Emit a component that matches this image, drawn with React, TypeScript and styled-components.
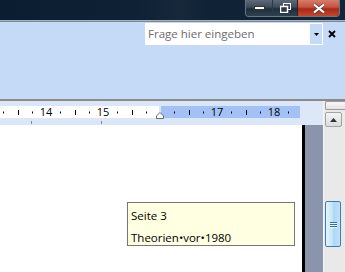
import React from "react";
import styled, { createGlobalStyle } from "styled-components";

const Global = createGlobalStyle`
  html, body { margin: 0; padding: 0; overflow: hidden; background: #fff; }
  * { box-sizing: border-box; }
`;

const Frame = styled.div`
  width: 345px;
  height: 272px;
  display: flex;
  flex-direction: column;
  font-family: "Open Sans", "Noto Sans", sans-serif;
  overflow: hidden;
`;

const TitleBar = styled.div`
  height: 20px;
  flex: none;
  background: linear-gradient(90deg, #0b1d31 0%, #0f2135 40%, #16283a 52%, #0f2236 62%, #11263a 100%);
  display: flex;
  justify-content: flex-end;
  padding-right: 5px;
`;

const Separator = styled.div`
  height: 2px;
  flex: none;
  background: #a7b0bb;
  border-bottom: 1px solid #7d8896;
`;

const WinButtons = styled.div`
  display: flex;
  height: 17px;
  border: 1px solid #6c7580;
  border-top: none;
  border-radius: 0 0 4px 4px;
  overflow: hidden;
`;

const WinBtn = styled.div<{ $w: number; $close?: boolean }>`
  width: ${(p) => p.$w}px;
  height: 100%;
  display: flex;
  align-items: center;
  justify-content: center;
  border-left: ${(p) => (p.$close ? "1px solid #3a1c1c" : "1px solid #2c3a48")};
  background: ${(p) =>
    p.$close
      ? "linear-gradient(180deg, #d77b6b 0%, #c5533f 45%, #a82a17 55%, #c4462c 100%)"
      : "linear-gradient(180deg, #5d6b79 0%, #3b4a59 45%, #1f2e3d 55%, #2f4050 100%)"};
  &:first-child { border-left: none; }
`;

const Ribbon = styled.div`
  height: 78px;
  flex: none;
  background: #c5daf7;
  display: flex;
  align-items: flex-start;
  padding: 1px 0 0 145px;
`;

const SearchBox = styled.div`
  width: 178px;
  height: 22px;
  background: #fff;
  display: flex;
  align-items: stretch;
`;

const SearchText = styled.div`
  flex: 1;
  font-size: 11.5px;
  color: #6d6d6d;
  padding: 3px 0 0 3px;
  line-height: 15px;
`;

const Drop = styled.div`
  width: 12px;
  background: #c5daf7;
  margin: 1px 1px 1px 0;
  display: flex;
  align-items: center;
  justify-content: center;
`;

const CloseX = styled.div`
  width: 18px;
  height: 22px;
  display: flex;
  align-items: center;
  justify-content: center;
`;

const Body = styled.div`
  flex: 1;
  display: flex;
  border-top: 2px solid #8b8b8b;
  margin-top: -1px;
`;

const LeftCol = styled.div`
  width: 323px;
  display: flex;
  flex-direction: column;
`;

const RulerRow = styled.div`
  height: 24px;
  flex: none;
  display: flex;
  background: #dbe7f9;
`;

const RulerRight = styled.div`
  flex: 1;
  background: #dce7f8;
`;

const ContentRow = styled.div`
  flex: 1;
  display: flex;
`;

const Page = styled.div`
  width: 302px;
  background: #fff;
  position: relative;
`;

const PageEdge = styled.div`
  width: 3px;
  background: #000;
`;

const Gutter = styled.div`
  flex: 1;
  background: #8a94aa;
`;

const ScrollCol = styled.div`
  flex: 1;
  background: #e9e9ea;
  border-left: 1px solid #f5f5f5;
  display: flex;
  flex-direction: column;
  align-items: flex-start;
  padding: 0 0 0 1px;
`;

const SplitBox = styled.div`
  width: 20px;
  height: 9px;
  border: 1px solid #9a9a9a;
  border-right: none;
  background: linear-gradient(180deg, #f7f7f7, #e4e4e4);
  border-radius: 2px 0 0 2px;
`;

const ArrowBtn = styled.div`
  width: 17px;
  height: 15px;
  margin-top: 2px;
  border: 1px solid #a3a3a3;
  border-radius: 2px;
  background: linear-gradient(180deg, #f4f4f4, #dcdcdc);
  display: flex;
  align-items: center;
  justify-content: center;
`;

const Thumb = styled.div`
  width: 16px;
  height: 46px;
  margin-top: 74px;
  border: 1px solid #3c7fb1;
  border-radius: 2px;
  background: linear-gradient(90deg, #e3f4fc 0%, #c4e5f8 45%, #a9d8f4 55%, #bfe2f7 100%);
  display: flex;
  flex-direction: column;
  align-items: center;
  justify-content: center;
  gap: 1px;
`;

const Grip = styled.div`
  width: 7px;
  height: 1px;
  background: #3c6d92;
  box-shadow: 0 1px 0 #e8f6fe;
`;

const Tooltip = styled.div`
  position: absolute;
  left: 127px;
  top: 77px;
  width: 168px;
  height: 44px;
  background: #ffffe1;
  border: 1px solid #767676;
  padding: 2px 0 0 3px;
  font-size: 11.5px;
  line-height: 22px;
  color: #000;
`;

const Ruler: React.FC = () => {
  const marks: React.ReactNode[] = [];
  for (let j = -3; j <= 18; j++) {
    const x = 46 + 14.25 * j;
    if (x < 0 || x > 300) continue;
    const m = ((j % 4) + 4) % 4;
    if (m === 0) {
      const n = 14 + j / 4;
      if (n === 16) continue;
      marks.push(
        <text key={j} x={x} y={15} fontSize={11} textAnchor="middle" fontFamily="'Open Sans', sans-serif" fill="#000">
          {n}
        </text>
      );
    } else if (m === 2) {
      marks.push(<rect key={j} x={Math.round(x)} y={9} width={1} height={5} fill="#000" />);
    } else {
      marks.push(<rect key={j} x={Math.round(x)} y={10.5} width={1} height={2} fill="#000" />);
    }
  }
  return (
    <svg width={300} height={24} style={{ display: "block", flex: "none" }}>
      <rect x={0} y={0} width={300} height={24} fill="#dbe7f9" />
      <rect x={0} y={5} width={159} height={12} fill="#fff" />
      <rect x={161} y={5} width={139} height={12} fill="#a3c1f4" />
      {marks}
      <rect x={31} y={20} width={1} height={3} fill="#8a8a8a" />
      <rect x={101} y={20} width={1} height={3} fill="#8a8a8a" />
      <polygon points="156.5,17.5 156.5,15 160,11.5 163.5,15 163.5,17.5" fill="#fff" stroke="#6a6a6a" strokeWidth={1} />
    </svg>
  );
};

export default function App() {
  return (
    <Frame>
      <Global />
      <TitleBar>
        <WinButtons>
          <WinBtn $w={26}>
            <svg width="11" height="4"><rect x="0.5" y="0.5" width="10" height="3" fill="#fff" stroke="#333" strokeWidth="1" /></svg>
          </WinBtn>
          <WinBtn $w={25}>
            <svg width="11" height="10">
              <rect x="3.5" y="0.5" width="7" height="6" fill="none" stroke="#fff" strokeWidth="1" />
              <rect x="0.5" y="3.5" width="7" height="6" fill="#2a3a4a" stroke="#fff" strokeWidth="1.5" />
            </svg>
          </WinBtn>
          <WinBtn $w={42} $close>
            <svg width="14" height="11">
              <path d="M2 1.5 L12 9.5 M12 1.5 L2 9.5" stroke="#444" strokeWidth="3.4" />
              <path d="M2 1.5 L12 9.5 M12 1.5 L2 9.5" stroke="#fff" strokeWidth="2.2" />
            </svg>
          </WinBtn>
        </WinButtons>
      </TitleBar>
      <Separator />
      <Ribbon>
        <SearchBox>
          <SearchText>Frage hier eingeben</SearchText>
          <Drop>
            <svg width="5" height="3"><path d="M0 0 H5 L2.5 3 Z" fill="#000" /></svg>
          </Drop>
        </SearchBox>
        <CloseX>
          <svg width="8" height="8"><path d="M1 1 L7 7 M7 1 L1 7" stroke="#000" strokeWidth="1.8" /></svg>
        </CloseX>
      </Ribbon>
      <Body>
        <LeftCol>
          <RulerRow>
            <Ruler />
            <RulerRight />
          </RulerRow>
          <ContentRow>
            <Page>
              <Tooltip>
                <div>Seite 3</div>
                <div>Theorien•vor•1980</div>
              </Tooltip>
            </Page>
            <PageEdge />
            <Gutter />
          </ContentRow>
        </LeftCol>
        <ScrollCol>
          <SplitBox />
          <ArrowBtn>
            <svg width="7" height="4"><path d="M0 4 L3.5 0 L7 4 Z" fill="#333" /></svg>
          </ArrowBtn>
          <Thumb>
            <Grip />
            <Grip />
            <Grip />
          </Thumb>
        </ScrollCol>
      </Body>
    </Frame>
  );
}
